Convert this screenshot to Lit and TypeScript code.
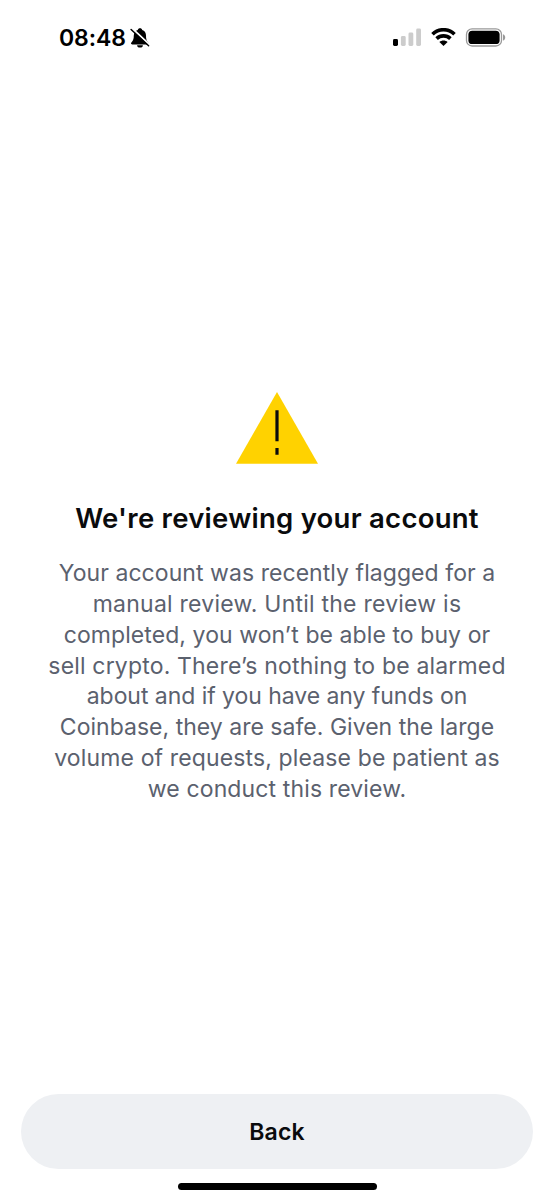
import { LitElement, html, css } from "lit";
import { customElement } from "lit/decorators.js";

interface CopyLine {
  text: string;
  tracking: number;
}

const COPY: CopyLine[] = [
  { text: "Your account was recently flagged for a", tracking: 0.06 },
  { text: "manual review. Until the review is", tracking: 0.23 },
  { text: "completed, you won’t be able to buy or", tracking: 0.08 },
  { text: "sell crypto. There’s nothing to be alarmed", tracking: 0.17 },
  { text: "about and if you have any funds on", tracking: -0.05 },
  { text: "Coinbase, they are safe. Given the large", tracking: 0.02 },
  { text: "volume of requests, please be patient as", tracking: 0.13 },
  { text: "we conduct this review.", tracking: 0.13 },
];

@customElement("status-bar")
class StatusBar extends LitElement {
  static styles = css`
    :host {
      display: flex;
      align-items: center;
      justify-content: space-between;
      height: 75px;
      padding: 0 48px 0 59px;
      box-sizing: border-box;
    }
    .left,
    .right {
      display: flex;
      align-items: center;
    }
    .left {
      gap: 4px;
    }
    .right {
      gap: 9px;
      padding-bottom: 1px;
    }
    .time {
      padding-top: 2px;
      font-size: 23px;
      line-height: 29px;
      font-weight: 600;
      letter-spacing: -0.1px;
      color: #000;
    }
    svg {
      display: block;
    }
  `;

  render() {
    return html`
      <div class="left">
        <span class="time">08:48</span>
        <svg width="20" height="20" viewBox="0 0 20 20">
          <path d="M10 .2c-1.200 0-2 .7-2.200 1.700C5.300 2.800 3.800 4.800 3.800 7.500c0 3.300-.6 4.900-2 6.400-.6.600-.8.900-.8 1.400 0 .7.500 1.100 1.300 1.100h15c.8 0 1.300-.4 1.300-1.100 0-.5-.2-.8-.8-1.400-1.400-1.500-1.800-3.100-1.800-6.400 0-2.700-1.300-4.700-3.800-5.600C12 .9 11.200.2 10 .2zM7.100 17.300a2.900 2.300 0 0 0 5.800 0z" fill="#000" />
          <path d="M2.400 .7 20 17" stroke="#fff" stroke-width="2" />
          <path d="M1.100 1.500 18.600 17.700" stroke="#000" stroke-width="1.500" stroke-linecap="round" />
        </svg>
      </div>
      <div class="right">
        <svg width="29" height="18" viewBox="0 0 29 18">
          <rect x="0" y="11" width="5" height="7" rx="1.400" fill="#000" />
          <rect x="7.900" y="8" width="4.800" height="10" rx="1.400" fill="#ccc" />
          <rect x="15.500" y="4.500" width="4.800" height="13.500" rx="1.400" fill="#ccc" />
          <rect x="23.200" y="0.500" width="4.800" height="17.500" rx="1.400" fill="#ccc" />
        </svg>
        <svg width="25" height="18" viewBox="0 0 25 18">
          <g fill="none" stroke="#000" stroke-width="3.600">
            <path d="M1.500 6.200C7.600.2 17.400.2 23.500 6.200" />
            <path d="M5.600 10.600c3.800-3.700 10-3.700 13.800 0" />
          </g>
          <path d="M12.500 18 8.400 13.900c2.300-2 5.900-2 8.200 0z" fill="#000" />
        </svg>
        <svg width="41" height="19" viewBox="0 0 41 19">
          <rect x="1.500" y="0.800" width="35" height="17.200" rx="5.600" fill="none" stroke="#999" stroke-width="1.300" />
          <rect x="3.400" y="2.700" width="31.200" height="13.400" rx="3.900" fill="#000" />
          <path d="M38 6.300c1.400.4 2.200 1.600 2.200 3.100s-.8 2.700-2.200 3.100z" fill="#999" />
        </svg>
      </div>
    `;
  }
}

@customElement("app-root")
class AppRoot extends LitElement {
  static styles = css`
    :host {
      display: flex;
      flex-direction: column;
      height: 1200px;
      background: #fff;
      font-family: Inter, "Noto Sans", sans-serif;
      overflow: hidden;
    }
    .content {
      flex: 1;
      display: flex;
      flex-direction: column;
      align-items: center;
      padding-top: 316px;
    }
    .warning {
      display: block;
    }
    .title {
      margin: 35px 0 0;
      font-size: 27.500px;
      line-height: 36px;
      font-weight: 640;
      letter-spacing: 0.26px;
      color: #0a0b0d;
      white-space: nowrap;
    }
    .copy {
      margin: 22px 0 0;
      font-size: 23px;
      line-height: 30.860px;
      color: #5b616e;
      text-align: center;
    }
    .line {
      display: block;
      white-space: nowrap;
    }
    .footer {
      display: flex;
      flex-direction: column;
      align-items: center;
      gap: 14px;
      padding: 0 21px 10px;
    }
    .back {
      width: 100%;
      height: 75px;
      border: 0;
      border-radius: 38px;
      background: #eef0f3;
      color: #0a0b0d;
      font-family: inherit;
      font-size: 23px;
      font-weight: 600;
      letter-spacing: 0.2px;
      padding: 1px 0 0;
    }
    .home {
      width: 199px;
      height: 7px;
      border-radius: 4px;
      background: #000;
    }
  `;

  render() {
    return html`
      <status-bar></status-bar>
      <div class="content">
        <svg class="warning" width="84" height="74" viewBox="0 0 84 74">
          <path d="M42 1 83 72.800H1z" fill="#ffd200" />
          <path d="M40.400 19.300h3.200v31h-3.200zM40.400 57h3.200v6.800h-3.200z" fill="#0a0b0d" />
        </svg>
        <h1 class="title">We're reviewing your account</h1>
        <p class="copy">
          ${COPY.map(
            (line) => html`<span class="line" style="letter-spacing:${line.tracking}px">${line.text}</span>`
          )}
        </p>
      </div>
      <div class="footer">
        <button class="back">Back</button>
        <div class="home"></div>
      </div>
    `;
  }
}
